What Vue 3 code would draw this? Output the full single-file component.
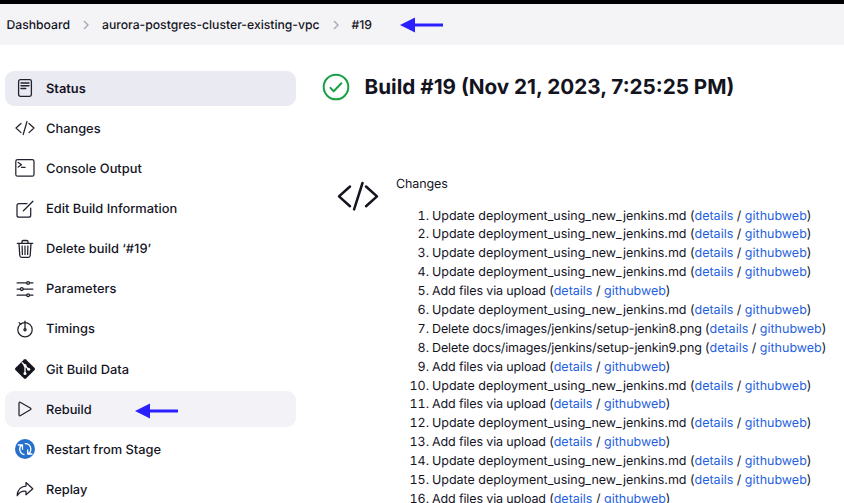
<script setup>
const crumbs = ['Dashboard', 'aurora-postgres-cluster-existing-vpc', '#19']
const tasks = [
  { id: 'status', label: 'Status' },
  { id: 'code', label: 'Changes' },
  { id: 'console', label: 'Console Output' },
  { id: 'edit', label: 'Edit Build Information' },
  { id: 'trash', label: 'Delete build ‘#19’' },
  { id: 'params', label: 'Parameters' },
  { id: 'timer', label: 'Timings' },
  { id: 'git', label: 'Git Build Data' },
  { id: 'play', label: 'Rebuild' },
  { id: 'restart', label: 'Restart from Stage' },
  { id: 'replay', label: 'Replay' },
]
const update = { kind: 'update', text: 'Update deployment_using_new_jenkins.md' }
const add = { kind: 'add', text: 'Add files via upload' }
const remove = (n) => ({ kind: 'remove', text: `Delete docs/images/jenkins/setup-jenkin${n}.png` })
const changes = [
  update, update, update, update, add, update, remove(8), remove(9),
  add, update, add, update, add, update, update, add,
]
</script>

<template>
  <div class="page">
    <header class="crumbs">
      <template v-for="(c, i) in crumbs" :key="c">
        <svg v-if="i" class="chevron" viewBox="0 0 6 10"><path d="M1 1l4 4-4 4" /></svg>
        <a class="crumb">{{ c }}</a>
      </template>
      <svg class="arrow crumb-arrow" viewBox="0 0 43 16"><path d="M0 8L15 .5v15z" /><path d="M14 6.5h29v3H14z" /></svg>
    </header>

    <div class="body">
      <nav class="side">
        <a v-for="t in tasks" :key="t.id" class="task" :class="t.id">
          <svg class="icon" viewBox="0 0 20 20">
            <g v-if="t.id === 'status'">
              <rect x="3.6" y="1.6" width="12.8" height="16.8" rx="1.8" stroke-width="1.3" />
              <path d="M6 5h8M6 7.7h8M6 10.5h4.8" stroke-width="1.4" />
            </g>
            <path v-else-if="t.id === 'code'" d="M6 5.5L1 10l5 4.6M14 5.5l5 4.5-5 4.6M12 3.5L8.2 16.5" />
            <g v-else-if="t.id === 'console'">
              <rect x=".8" y="1.6" width="18.2" height="16.6" rx="1.8" />
              <path d="M3.2 4.5l3.3 2.2-3.3 2.4M6.5 9.3h3.6" />
            </g>
            <path v-else-if="t.id === 'edit'" d="M12 4.5H4a2 2 0 0 0-2 2v9.7a2 2 0 0 0 2 2h9.7a2 2 0 0 0 2-2V9M8.4 11.8L17.9 2.2" />
            <g v-else-if="t.id === 'trash'">
              <path d="M2.3 4.3h15.4M7 4V2.8Q7 1.5 8.3 1.5h3.4Q13 1.5 13 2.8V4M4 4.5l.8 12q.1 1.8 1.8 1.8h6.8q1.7 0 1.8-1.8l.8-12" stroke-width="1.3" />
              <path d="M7.1 7l.3 8.5M10 7v8.5M12.9 7l-.3 8.5" />
            </g>
            <g v-else-if="t.id === 'params'">
              <path d="M2.1 3.9h9.6M14.5 3.9h3.4M2.1 10.1h3.3M8.2 10.1h9.7M2.1 16.2h9.6M14.5 16.2h3.4" />
              <circle cx="13.1" cy="3.9" r="1.4" /><circle cx="6.8" cy="10.1" r="1.4" /><circle cx="13.1" cy="16.2" r="1.4" />
            </g>
            <g v-else-if="t.id === 'timer'">
              <circle cx="10" cy="10.7" r="7.2" />
              <path d="M10 2.2V10M4.1 3.6l1.7 1.7" stroke-width="1.3" /><circle cx="10" cy="10.8" r="1.1" />
            </g>
            <g v-else-if="t.id === 'git'">
              <path class="solid" d="M9 .5q1-.9 2 0L19.6 9q.9 1 0 2L11 19.6q-1 .9-2 0L.4 11q-.9-1 0-2z" />
              <path class="white" d="M7.2 3.7L10 6.5v8M10 6.7l3.5 3.5" />
              <g class="white-fill"><circle cx="10" cy="6.5" r="1.5" /><circle cx="10" cy="14.4" r="1.5" /><circle cx="13.7" cy="10.3" r="1.5" /></g>
            </g>
            <path v-else-if="t.id === 'play'" d="M4 4.5Q4 2.6 5.6 3.5L15.3 9Q16.7 9.9 15.3 10.8L5.6 16.5Q4 17.3 4 15.6z" />
            <g v-else-if="t.id === 'restart'">
              <circle class="blue" cx="10" cy="10" r="10" />
              <path class="white" d="M3.3 6h4.2v4.2M6.5 6.2A5.5 5.5 0 0 0 9 15.6M17 15h-4.3v-4.2M13.6 14.6A5.5 5.5 0 0 0 10.3 4.7" />
            </g>
            <path v-else d="M11 3.5L17.8 9.7 11 15.8V12.3Q5.3 11.6 2.2 16.8 2.5 7.7 11 7.1z" />
          </svg>
          <span class="label">{{ t.label }}</span>
          <svg v-if="t.id === 'play'" class="arrow task-arrow" viewBox="0 0 43 16"><path d="M0 8L15 .5v15z" /><path d="M14 6.5h29v3H14z" /></svg>
        </a>
      </nav>

      <main class="main">
        <div class="heading">
          <svg class="ok" viewBox="0 0 28 28"><circle cx="14" cy="14" r="12.3" /><path d="M8.5 14.8l3.2 3.5 7.6-8.1" /></svg>
          <h1>Build #19 (Nov 21, 2023, 7:25:25 PM)</h1>
        </div>
        <section class="changes">
          <svg class="code-big" viewBox="0 0 42 32"><path d="M13 6.5L2 16.4l11 9.8M29 6.5l11 9.9-11 9.8M25.5 3l-8.4 26.4" /></svg>
          <div class="log">
            <p>Changes</p>
            <ol>
              <li v-for="(c, i) in changes" :key="i">
                <span class="num">{{ i + 1 }}.</span>
                <span><span class="msg" :class="c.kind">{{ c.text }} (</span><a>details</a> / <a>githubweb</a>)</span>
              </li>
            </ol>
          </div>
        </section>
      </main>
    </div>
  </div>
</template>

<style>
body { overflow: hidden; }
</style>

<style scoped>
.page { width: 844px; height: 503px; overflow: hidden; background: #fff; color: #14141f; font-family: Inter, "Liberation Sans", sans-serif; font-size: 12.5px; text-rendering: geometricPrecision; box-sizing: border-box; border-top: 4px solid #000; }
.crumbs { height: 41px; background: #f4f4f6; display: flex; align-items: center; padding-left: 6.5px; box-sizing: border-box; }
.crumb { line-height: 20px; font-size: 12.2px; font-weight: 500; letter-spacing: -0.01px; white-space: nowrap; }
.chevron { width: 6px; height: 10px; margin: 0 13px; fill: none; stroke: #a9a7bd; stroke-width: 1.4; flex: none; }
.arrow { width: 43px; height: 16px; fill: #2a1fff; flex: none; }
.crumb-arrow { margin-left: 28px; }
.body { display: flex; }
.side { width: 291px; margin-left: 5px; padding-top: 25.6px; display: flex; flex-direction: column; gap: 4.7px; flex: none; }
.task { height: 35.4px; display: flex; align-items: center; border-radius: 9px; padding-left: 10px; box-sizing: border-box; flex: none; }
.status { background: #eaeaf3; }
.play { background: #f2f2f7; }
.icon { width: 20px; height: 20px; margin-right: 11px; overflow: visible; fill: none; stroke: #22222e; stroke-width: 1.25; stroke-linecap: round; stroke-linejoin: round; flex: none; }
.label { font-size: 12.85px; font-weight: 500; line-height: 18px; margin-top: 3.4px; white-space: nowrap; }
.status .label { font-weight: 600; }
.solid { fill: #14141f; stroke: none; }
.white { stroke: #fff; stroke-width: 1.3; }
.white-fill { fill: #fff; stroke: none; }
.blue { fill: #2570cc; stroke: none; }
.task-arrow { margin: 4px 0 0 43px; }
.main { margin-left: 26px; padding-top: 28px; }
.heading { display: flex; align-items: center; height: 28px; }
.ok { width: 28px; height: 28px; fill: none; stroke: #1a9f45; stroke-width: 2; stroke-linecap: round; stroke-linejoin: round; }
h1 { margin: 0 0 0 14.5px; font-size: 20.7px; line-height: 28px; font-weight: 700; white-space: nowrap; }
.changes { display: flex; padding-top: 73px; }
.code-big { width: 42px; height: 32px; margin: 6px 17.5px 0 14.5px; fill: none; stroke: #14141f; stroke-width: 2.5; stroke-linecap: round; stroke-linejoin: round; flex: none; }
p { margin: 1px 0 13.53px; line-height: 19px; letter-spacing: -0.1px; }
ol { list-style: none; margin: 0; padding: 0; }
li { display: flex; height: 18.891px; line-height: 18.891px; white-space: nowrap; }
.num { width: 33px; margin-right: 3px; text-align: right; font-variant-numeric: tabular-nums; }
.update { letter-spacing: -0.02px; }
.add, .remove { letter-spacing: -0.13px; }
a { color: inherit; }
li a { color: #1f5fe0; }
</style>
